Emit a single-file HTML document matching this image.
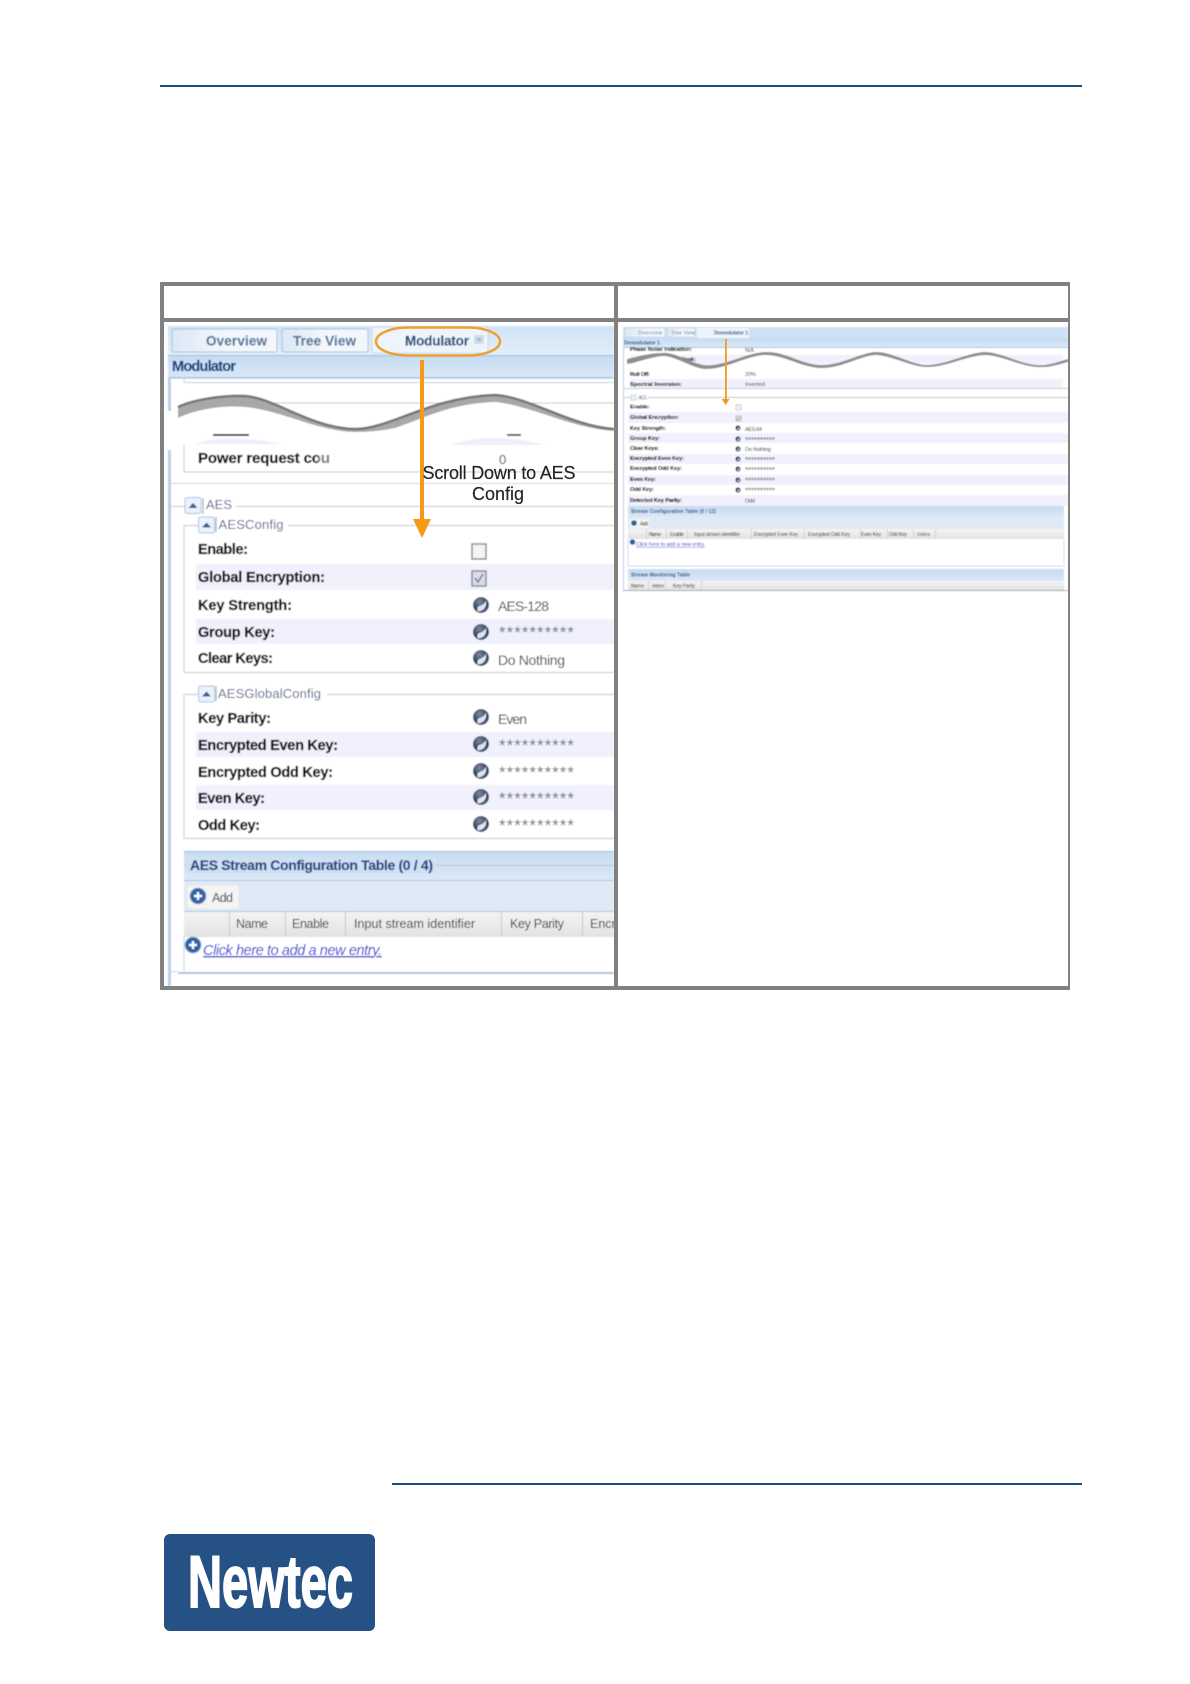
<!DOCTYPE html>
<html><head><meta charset="utf-8"><style>
html,body{margin:0;padding:0;background:#fff}
svg{display:block}
text{font-family:"Liberation Sans",sans-serif}
.b{font-weight:bold;font-size:14.5px;fill:#0c1016;stroke:#0c1016;stroke-width:.3px}
.v{font-size:14px;fill:#3a4048}
.s{font-size:17px;fill:#6a7078}
.l{font-size:13px;fill:#55658a}
.h{font-size:12.5px;fill:#30363f}
.tb{font-weight:bold;font-size:13.5px;fill:#56789a;stroke:#56789a;stroke-width:.15px}
.rb{font-weight:bold;font-size:5.6px;fill:#000;stroke:#000;stroke-width:.12px}
.rv{font-size:5.6px;fill:#333}
.rs{font-size:8px;fill:#555}
.rh{font-size:5px;fill:#222}
</style></head><body>
<svg xmlns="http://www.w3.org/2000/svg" width="1190" height="1684" viewBox="0 0 1190 1684">
<defs>
<linearGradient id="tab" x1="0" y1="0" x2="0" y2="1"><stop offset="0" stop-color="#cfe3f7"/><stop offset="1" stop-color="#e4eef8"/></linearGradient>
<linearGradient id="tab1" x1="0" y1="0" x2="1" y2="0"><stop offset="0" stop-color="#dbe8f5"/><stop offset=".5" stop-color="#f3f7fc"/><stop offset="1" stop-color="#f3f7fc"/></linearGradient>
<linearGradient id="hd" x1="0" y1="0" x2="0" y2="1"><stop offset="0" stop-color="#c6dbf1"/><stop offset="1" stop-color="#dbe8f6"/></linearGradient>
<linearGradient id="gh" x1="0" y1="0" x2="0" y2="1"><stop offset="0" stop-color="#f4f4f4"/><stop offset="1" stop-color="#e2e2e2"/></linearGradient>
<radialGradient id="ic" cx=".4" cy=".3" r=".8"><stop offset="0" stop-color="#7c8aa0"/><stop offset=".6" stop-color="#33415c"/><stop offset="1" stop-color="#5a6788"/></radialGradient>
<filter id="bl" x="-2%" y="-2%" width="104%" height="104%"><feGaussianBlur stdDeviation=".4"/></filter>
<filter id="bl2" x="-2%" y="-2%" width="104%" height="104%"><feGaussianBlur stdDeviation=".3"/></filter>
<clipPath id="lp"><rect x="164" y="322" width="450" height="664"/></clipPath>
<clipPath id="rp"><rect x="618" y="322" width="450" height="664"/></clipPath>
<g id="h"><circle r="8" fill="url(#ic)"/><path d="M-3 6.500 C3 6 6 2 5 -4.500 C3.500 -1 1 0 -1.500 1 C-4 2 -4 4 -3 6.500Z" fill="#dfe4ec"/></g>
<g id="btn"><rect x="-8" y="-8" width="16" height="16" rx="2" fill="#eaf2fb" stroke="#a9c4e4"/><path d="M-4.500 2.500 L0 -2.500 L4.500 2.500Z" fill="#3d5f94"/></g>
<g id="pl"><circle r="8" fill="#2f62a6"/><circle r="8" fill="none" stroke="#9fb8d8" stroke-width="1"/><path d="M-4 0H4M0 -4V4" stroke="#fff" stroke-width="2.400"/></g>
<g id="hs"><circle r="2.600" fill="#3a4866"/><path d="M-.5 1.800 C1 1.400 1.600 .3 1.200 -1.200 C.8 -.2 0 .2 -.5 .6Z" fill="#e8ecf2"/></g>
</defs>
<rect width="1190" height="1684" fill="#fff"/>

<rect x="160" y="85" width="922" height="2" fill="#1f4e79"/>
<rect x="392" y="1483" width="690" height="2" fill="#1f4e79"/>

<!-- LEFT PANE -->
<g clip-path="url(#lp)"><g filter="url(#bl)">
<rect x="168" y="326" width="446" height="660" fill="#fff"/>
<rect x="168" y="326" width="446" height="30" fill="url(#tab)"/>
<rect x="172" y="329" width="105" height="23" rx="2" fill="url(#tab1)" stroke="#a9c0dc"/>
<rect x="282" y="329" width="86" height="23" rx="2" fill="url(#tab1)" stroke="#a9c0dc"/>
<rect x="372" y="327" width="116" height="26" rx="2" fill="#eef4fb" stroke="#c9d9ea"/>
<text class="tb" x="206" y="345.500" textLength="61">Overview</text>
<text class="tb" x="293" y="345.500" textLength="63">Tree View</text>
<text class="tb" x="405" y="345.500" textLength="64" style="fill:#2b4f78;stroke:#2b4f78">Modulator</text>
<rect x="474" y="335" width="10" height="9" rx="1" fill="#cfdcec"/><path d="M477 338l4 3m0-3l-4 3" stroke="#8ba3c2"/>
<rect x="168" y="355" width="446" height="1.500" fill="#9bbbe0"/>
<rect x="168" y="356" width="446" height="23" fill="url(#hd)"/>
<rect x="168" y="377" width="446" height="1.500" fill="#a8c4e6"/>
<text x="172" y="371" font-weight="bold" font-size="14.5" fill="#1f4680" stroke="#1f4680" stroke-width=".2" textLength="64">Modulator</text>
<rect x="168" y="379" width="3" height="32" fill="#b8cfea"/>
<path d="M184 379V382.500H614" fill="none" stroke="#c4cdd8"/>
<path d="M196 403H614" stroke="#c4c8ce"/>
<!-- white area below wave -->
<path d="M165 418 C195 410 225 406 245 407 C280 410 320 432 355 432 C370 432 380 431 395 428 C420 420 450 403 495 402 C530 405 570 428 620 431 V445 H165Z" fill="#fff"/>
<rect x="213" y="434" width="36" height="2" fill="#222" opacity=".85"/>
<rect x="507" y="434" width="14" height="2" fill="#444" opacity=".85"/>
<path d="M195 444 Q225 433 282 444Z" fill="#eeeefa"/><path d="M450 445 Q490 431 545 445Z" fill="#eeeefa"/>
<path d="M178 406 C195 398 225 394 245 395 C275 397 310 427 355 428 C390 428 430 396 495 394 C530 396 570 425 614 428 V431 C570 428 530 405 495 402 C450 403 420 420 395 428 C380 431 370 432 355 432 C320 432 280 410 245 407 C220 405 195 410 178 418Z" fill="#a8a8a8"/>
<path d="M178 407 C195 399 225 395 245 396 C275 398 310 428 355 429 C390 429 430 397 495 395 C530 397 570 426 614 429" fill="none" stroke="#767676" stroke-width="2.500"/>
<rect x="168" y="450" width="3" height="536" fill="#b8cfea"/>
<text class="b" x="198" y="463" textLength="132" style="font-size:15px">Power request cou</text>
<rect x="318" y="450" width="14" height="18" fill="#fff" opacity=".5"/>
<text x="499" y="464" font-size="13" fill="#3a4048">0</text>
<path d="M184 445V472H614" fill="none" stroke="#c2c6cc"/>
<path d="M170 483.500H614" stroke="#d0d4da"/>
<path d="M170 506.500H186M236 506.500H614" stroke="#c2c6cc"/>
<use href="#btn" x="193" y="505.500"/><rect x="202.500" y="498" width="1" height="16" fill="#7e8ca6"/>
<text class="l" x="206" y="509" textLength="26">AES</text>
<path d="M184 672V525.500H198M288 525.500H614M184 672.500H614" fill="none" stroke="#c2c6cc"/>
<use href="#btn" x="206.500" y="525"/><rect x="215.500" y="517" width="1" height="15" fill="#7e8ca6"/>
<text class="l" x="218.500" y="529" textLength="65">AESConfig</text>
<rect x="196" y="564" width="418" height="26" fill="#f1f1fd"/>
<rect x="196" y="619" width="418" height="25" fill="#f1f1fd"/>
<text class="b" x="198" y="554" textLength="50">Enable:</text>
<text class="b" x="198" y="582" textLength="127">Global Encryption:</text>
<text class="b" x="198" y="610" textLength="94">Key Strength:</text>
<text class="b" x="198" y="637" textLength="77">Group Key:</text>
<text class="b" x="198" y="663" textLength="75">Clear Keys:</text>
<rect x="472" y="544" width="14" height="15" fill="#f4f4f4" stroke="#8e8e8e" stroke-width="1.500"/>
<rect x="472" y="571" width="14" height="15" fill="#d8dce4" stroke="#8e8e8e" stroke-width="1.500"/>
<path d="M475 578l3 4 5-8" fill="none" stroke="#6680b0" stroke-width="1.500"/>
<use href="#h" x="481" y="605"/><use href="#h" x="481" y="632"/><use href="#h" x="481" y="658"/>
<text class="v" x="498" y="611" textLength="51">AES-128</text>
<text class="s" x="499" y="638" textLength="75">**********</text>
<text class="v" x="498" y="665" textLength="67">Do Nothing</text>

<path d="M184 838.500V694.500H198M327 694.500H614M184 838.500H614" fill="none" stroke="#c2c6cc"/>
<use href="#btn" x="206.500" y="694"/><rect x="215.500" y="686" width="1" height="15" fill="#7e8ca6"/>
<text class="l" x="218" y="698" textLength="103">AESGlobalConfig</text>
<rect x="196" y="732" width="418" height="25" fill="#f1f1fd"/>
<rect x="196" y="785" width="418" height="25" fill="#f1f1fd"/>
<text class="b" x="198" y="723" textLength="73">Key Parity:</text>
<text class="b" x="198" y="750" textLength="140">Encrypted Even Key:</text>
<text class="b" x="198" y="777" textLength="135">Encrypted Odd Key:</text>
<text class="b" x="198" y="803" textLength="67">Even Key:</text>
<text class="b" x="198" y="830" textLength="62">Odd Key:</text>
<use href="#h" x="481" y="717"/><use href="#h" x="481" y="744"/><use href="#h" x="481" y="771"/><use href="#h" x="481" y="797"/><use href="#h" x="481" y="824"/>
<text class="v" x="498" y="724" textLength="29">Even</text>
<text class="s" x="499" y="751" textLength="75">**********</text>
<text class="s" x="499" y="778" textLength="75">**********</text>
<text class="s" x="499" y="804" textLength="75">**********</text>
<text class="s" x="499" y="831" textLength="75">**********</text>

<rect x="184" y="851" width="430" height="29" fill="url(#hd)"/>
<path d="M184 851.500H614" stroke="#9dbbe0"/>
<path d="M184 865.500H614" stroke="#b5c9e0"/>
<rect x="187" y="857" width="249" height="16" fill="#cfe0f2"/>
<text x="190" y="870" font-weight="bold" font-size="14" fill="#1f4680" stroke="#1f4680" stroke-width=".2" textLength="243">AES Stream Configuration Table (0 / 4)</text>
<rect x="184" y="880" width="430" height="31" fill="#dfeaf5"/>
<path d="M184 880.500H614" stroke="#a8c4e6"/>
<rect x="187" y="885" width="52" height="24" rx="2" fill="#f4f4f4" stroke="#e2e6ea"/>
<use href="#pl" x="198" y="896"/>
<text class="h" x="212" y="902" font-size="13" textLength="21">Add</text>
<rect x="184" y="911" width="430" height="26" fill="url(#gh)"/>
<path d="M184 911.500H614" stroke="#a8c4e6"/>
<path d="M229.500 911V936M285.500 911V936M345.500 911V936M501.500 911V936M582.500 911V936" stroke="#c8c8c8"/>
<text class="h" x="236" y="928" textLength="32">Name</text>
<text class="h" x="292" y="928" textLength="37">Enable</text>
<text class="h" x="354" y="928" textLength="121">Input stream identifier</text>
<text class="h" x="510" y="928" textLength="54">Key Parity</text>
<text class="h" x="590" y="928">Encr</text>
<path d="M184 936V973" stroke="#c2d2e6"/>
<use href="#pl" x="193" y="945"/>
<text x="203" y="955" font-size="14.500" font-style="italic" fill="#2233d0" text-decoration="underline" textLength="179">Click here to add a new entry.</text>
<path d="M168 971.500H178" stroke="#c8d8ec"/>
<rect x="178" y="972" width="436" height="2" fill="#b0c2da"/>
</g></g>

<!-- Orange annotations left -->
<g filter="url(#bl2)">
<rect x="376" y="327.500" width="124" height="28" rx="32" ry="14" fill="none" stroke="#eea02e" stroke-width="2.500"/>
<rect x="420" y="360" width="4" height="160" fill="#f59a17"/>
<path d="M413 519H431L422 538Z" fill="#f59a17"/>
<text x="499" y="479" font-size="18" fill="#222" stroke="#222" stroke-width=".15" text-anchor="middle" textLength="153">Scroll Down to AES</text>
<text x="498" y="500" font-size="18" fill="#222" stroke="#222" stroke-width=".15" text-anchor="middle">Config</text>
</g>

<!-- RIGHT PANE -->
<g clip-path="url(#rp)"><g filter="url(#bl)">
<rect x="623" y="327" width="445" height="263" fill="#fff"/>
<rect x="623" y="327" width="445" height="11" fill="#cfe2f5"/>
<rect x="625" y="328" width="40" height="9" fill="url(#tab1)" stroke="#bcd0e6" stroke-width=".6"/>
<rect x="667" y="328" width="28" height="9" fill="url(#tab1)" stroke="#bcd0e6" stroke-width=".6"/>
<rect x="697" y="328" width="52" height="10" fill="#eef4fb"/>
<text class="rh" x="638" y="334.500" style="fill:#4a6a8a" textLength="24">Overview</text>
<text class="rh" x="671" y="334.500" style="fill:#4a6a8a" textLength="24">Tree View</text>
<text class="rh" x="714" y="334.500" font-weight="bold" style="fill:#2b4f78" textLength="34">Demodulator 1</text>
<rect x="623" y="338" width="445" height="9" fill="url(#hd)"/>
<path d="M623 347.500H1068" stroke="#a8c4e6"/>
<text x="624" y="344.500" font-size="5.200" font-weight="bold" fill="#1f4680" textLength="36">Demodulator 1</text>
<rect x="623" y="347" width="1" height="243" fill="#b8cfea"/>
<text class="rb" x="630" y="351" textLength="62">Phase Noise Indication:</text>
<text class="rv" x="745" y="352" textLength="9">N/A</text>
<rect x="630" y="355" width="433" height="9" fill="#f1f1fd"/>
<text class="rb" x="680" y="361" textLength="16">Mask:</text>
<path d="M627 366 C640 360 650 356 663 354 C675 353 690 364 704 366 C725 368 745 354 765 353 C785 352 800 365 820 366 C840 367 860 354 875 353 C890 352 910 365 925 366 C945 367 965 354 985 353 C1000 353 1020 365 1037 366 C1050 367 1060 362 1068 360 V400 H627Z" fill="#fff"/>
<path d="M627 359 C640 356 650 353 663 353 C675 352 690 363 704 365 C725 367 745 353 765 352 C785 351 800 364 820 365 C840 366 860 353 875 352 C890 351 910 364 925 365 C945 366 965 353 985 352 C1000 352 1020 364 1037 365 C1050 366 1060 361 1068 359 V362 C1060 364 1050 368 1037 367 C1020 366 1000 355 985 355 C965 356 945 368 925 367 C910 366 890 355 875 355 C860 356 840 369 820 368 C800 367 785 355 765 355 C745 356 725 370 704 369 C690 367 675 356 663 356 C650 357 640 362 627 364Z" fill="#8e8e8e"/>
<rect x="630" y="379" width="433" height="9" fill="#f1f1fd"/>
<path d="M623 388.500H1068" stroke="#c8ccd2"/>
<text class="rb" x="630" y="376" textLength="20">Roll Off:</text>
<text class="rv" x="745" y="376" textLength="11">20%</text>
<text class="rb" x="630" y="386" textLength="52">Spectral Inversion:</text>
<text class="rv" x="745" y="386" textLength="20">Inverted</text>
<path d="M623 397.500H631M648 397.500H1068" stroke="#c2c6cc"/>
<rect x="631" y="395" width="5" height="5" fill="#eaf2fb" stroke="#a9c4e4" stroke-width=".6"/>
<text class="rv" x="638" y="399.500" textLength="9" style="fill:#6a7a9c">AES</text>
<rect x="628" y="412" width="440" height="11" fill="#f1f1fd"/>
<rect x="628" y="433" width="440" height="10" fill="#f1f1fd"/>
<rect x="628" y="454" width="440" height="10" fill="#f1f1fd"/>
<rect x="628" y="475" width="440" height="10" fill="#f1f1fd"/>
<rect x="628" y="495" width="440" height="11" fill="#f1f1fd"/>
<text class="rb" x="630" y="408.500" textLength="20">Enable:</text>
<text class="rb" x="630" y="419" textLength="49">Global Encryption:</text>
<text class="rb" x="630" y="430" textLength="36">Key Strength:</text>
<text class="rb" x="630" y="440" textLength="30">Group Key:</text>
<text class="rb" x="630" y="450" textLength="29">Clear Keys:</text>
<text class="rb" x="630" y="460" textLength="54">Encrypted Even Key:</text>
<text class="rb" x="630" y="470" textLength="52">Encrypted Odd Key:</text>
<text class="rb" x="630" y="481" textLength="26">Even Key:</text>
<text class="rb" x="630" y="491" textLength="24">Odd Key:</text>
<text class="rb" x="630" y="502" textLength="52">Detected Key Parity:</text>
<rect x="736" y="405" width="5" height="5" fill="#f4f4f4" stroke="#aaa" stroke-width=".6"/>
<rect x="736" y="416" width="5" height="5" fill="#e4e7ec" stroke="#999" stroke-width=".6"/>
<path d="M737 418.500l1 1.500 2-3" fill="none" stroke="#667" stroke-width=".6"/>
<use href="#hs" x="738" y="428"/><use href="#hs" x="738" y="439"/><use href="#hs" x="738" y="449"/><use href="#hs" x="738" y="459"/><use href="#hs" x="738" y="469"/><use href="#hs" x="738" y="480"/><use href="#hs" x="738" y="490"/>
<text class="rv" x="745" y="431" textLength="17">AES-64</text>
<text class="rs" x="745" y="443" textLength="30">**********</text>
<text class="rv" x="745" y="451" textLength="26">Do Nothing</text>
<text class="rs" x="745" y="463" textLength="30">**********</text>
<text class="rs" x="745" y="473" textLength="30">**********</text>
<text class="rs" x="745" y="483.500" textLength="30">**********</text>
<text class="rs" x="745" y="493.500" textLength="30">**********</text>
<text class="rv" x="745" y="502.500" textLength="10">Odd</text>

<rect x="628" y="506" width="436" height="11" fill="url(#hd)"/>
<text x="631" y="513" font-size="5" font-weight="bold" fill="#1f4680" textLength="85">Stream Configuration Table (0 / 12)</text>
<rect x="628" y="517" width="436" height="12" fill="#dfeaf5"/>
<rect x="630" y="519" width="19" height="9" fill="#f4f4f4"/>
<circle cx="634" cy="523" r="2.800" fill="#2f62a6"/>
<text class="rh" x="640" y="525.500" textLength="8">Add</text>
<rect x="628" y="529" width="436" height="10" fill="url(#gh)"/>
<path d="M646.500 529V539M666.500 529V539M687.500 529V539M751.500 529V539M804.500 529V539M860.500 529V539M887.500 529V539M913.500 529V539M935.500 529V539" stroke="#c8c8c8" stroke-width=".7"/>
<text class="rh" x="649" y="536" textLength="12">Name</text>
<text class="rh" x="670" y="536" textLength="14">Enable</text>
<text class="rh" x="694" y="536" textLength="46">Input stream identifier</text>
<text class="rh" x="754" y="536" textLength="44">Encrypted Even Key</text>
<text class="rh" x="808" y="536" textLength="42">Encrypted Odd Key</text>
<text class="rh" x="861" y="536" textLength="20">Even Key</text>
<text class="rh" x="889" y="536" textLength="18">Odd Key</text>
<text class="rh" x="917" y="536" textLength="13">Index</text>
<circle cx="632.500" cy="542" r="2.800" fill="#2f62a6"/>
<text x="636" y="546" font-size="5.500" fill="#2233d0" text-decoration="underline" textLength="69">Click here to add a new entry.</text>
<path d="M628 539V566H1064V539" fill="none" stroke="#c4d2e4" stroke-width=".8"/>
<rect x="628" y="569" width="436" height="12" fill="url(#hd)"/>
<text x="631" y="576.500" font-size="5" font-weight="bold" fill="#1f4680" textLength="59">Stream Monitoring Table</text>
<rect x="628" y="581" width="436" height="9" fill="url(#gh)"/>
<path d="M648.500 581V590M665.500 581V590M701.500 581V590" stroke="#c8c8c8" stroke-width=".7"/>
<text class="rh" x="631" y="587.500" textLength="13">Name</text>
<text class="rh" x="652" y="587.500" textLength="12">Index</text>
<text class="rh" x="673" y="587.500" textLength="22">Key Parity</text>
<path d="M623 590.500H1068" stroke="#a6acb4"/>
</g></g>
<g filter="url(#bl2)">
<rect x="725" y="339" width="1.800" height="61" fill="#f09a20"/>
<path d="M721.500 399H729.500L725.800 405Z" fill="#f09a20"/>
</g>

<!-- TABLE BORDERS -->
<g fill="#808080">
<rect x="160" y="282" width="910" height="4"/>
<rect x="160" y="318" width="910" height="4"/>
<rect x="160" y="986" width="910" height="4"/>
<rect x="160" y="282" width="4" height="708"/>
<rect x="614" y="282" width="4" height="708"/>
<rect x="1068" y="282" width="2" height="708"/>
</g>

<!-- LOGO -->
<rect x="164" y="1534" width="211" height="97" rx="6" fill="#255184"/>
<text x="188" y="1607" font-size="73" font-weight="bold" fill="#fff" stroke="#fff" stroke-width="2" textLength="165" lengthAdjust="spacingAndGlyphs" style='font-family:"Liberation Sans Narrow","Liberation Sans",sans-serif'>Newtec</text>
</svg>
</body></html>
